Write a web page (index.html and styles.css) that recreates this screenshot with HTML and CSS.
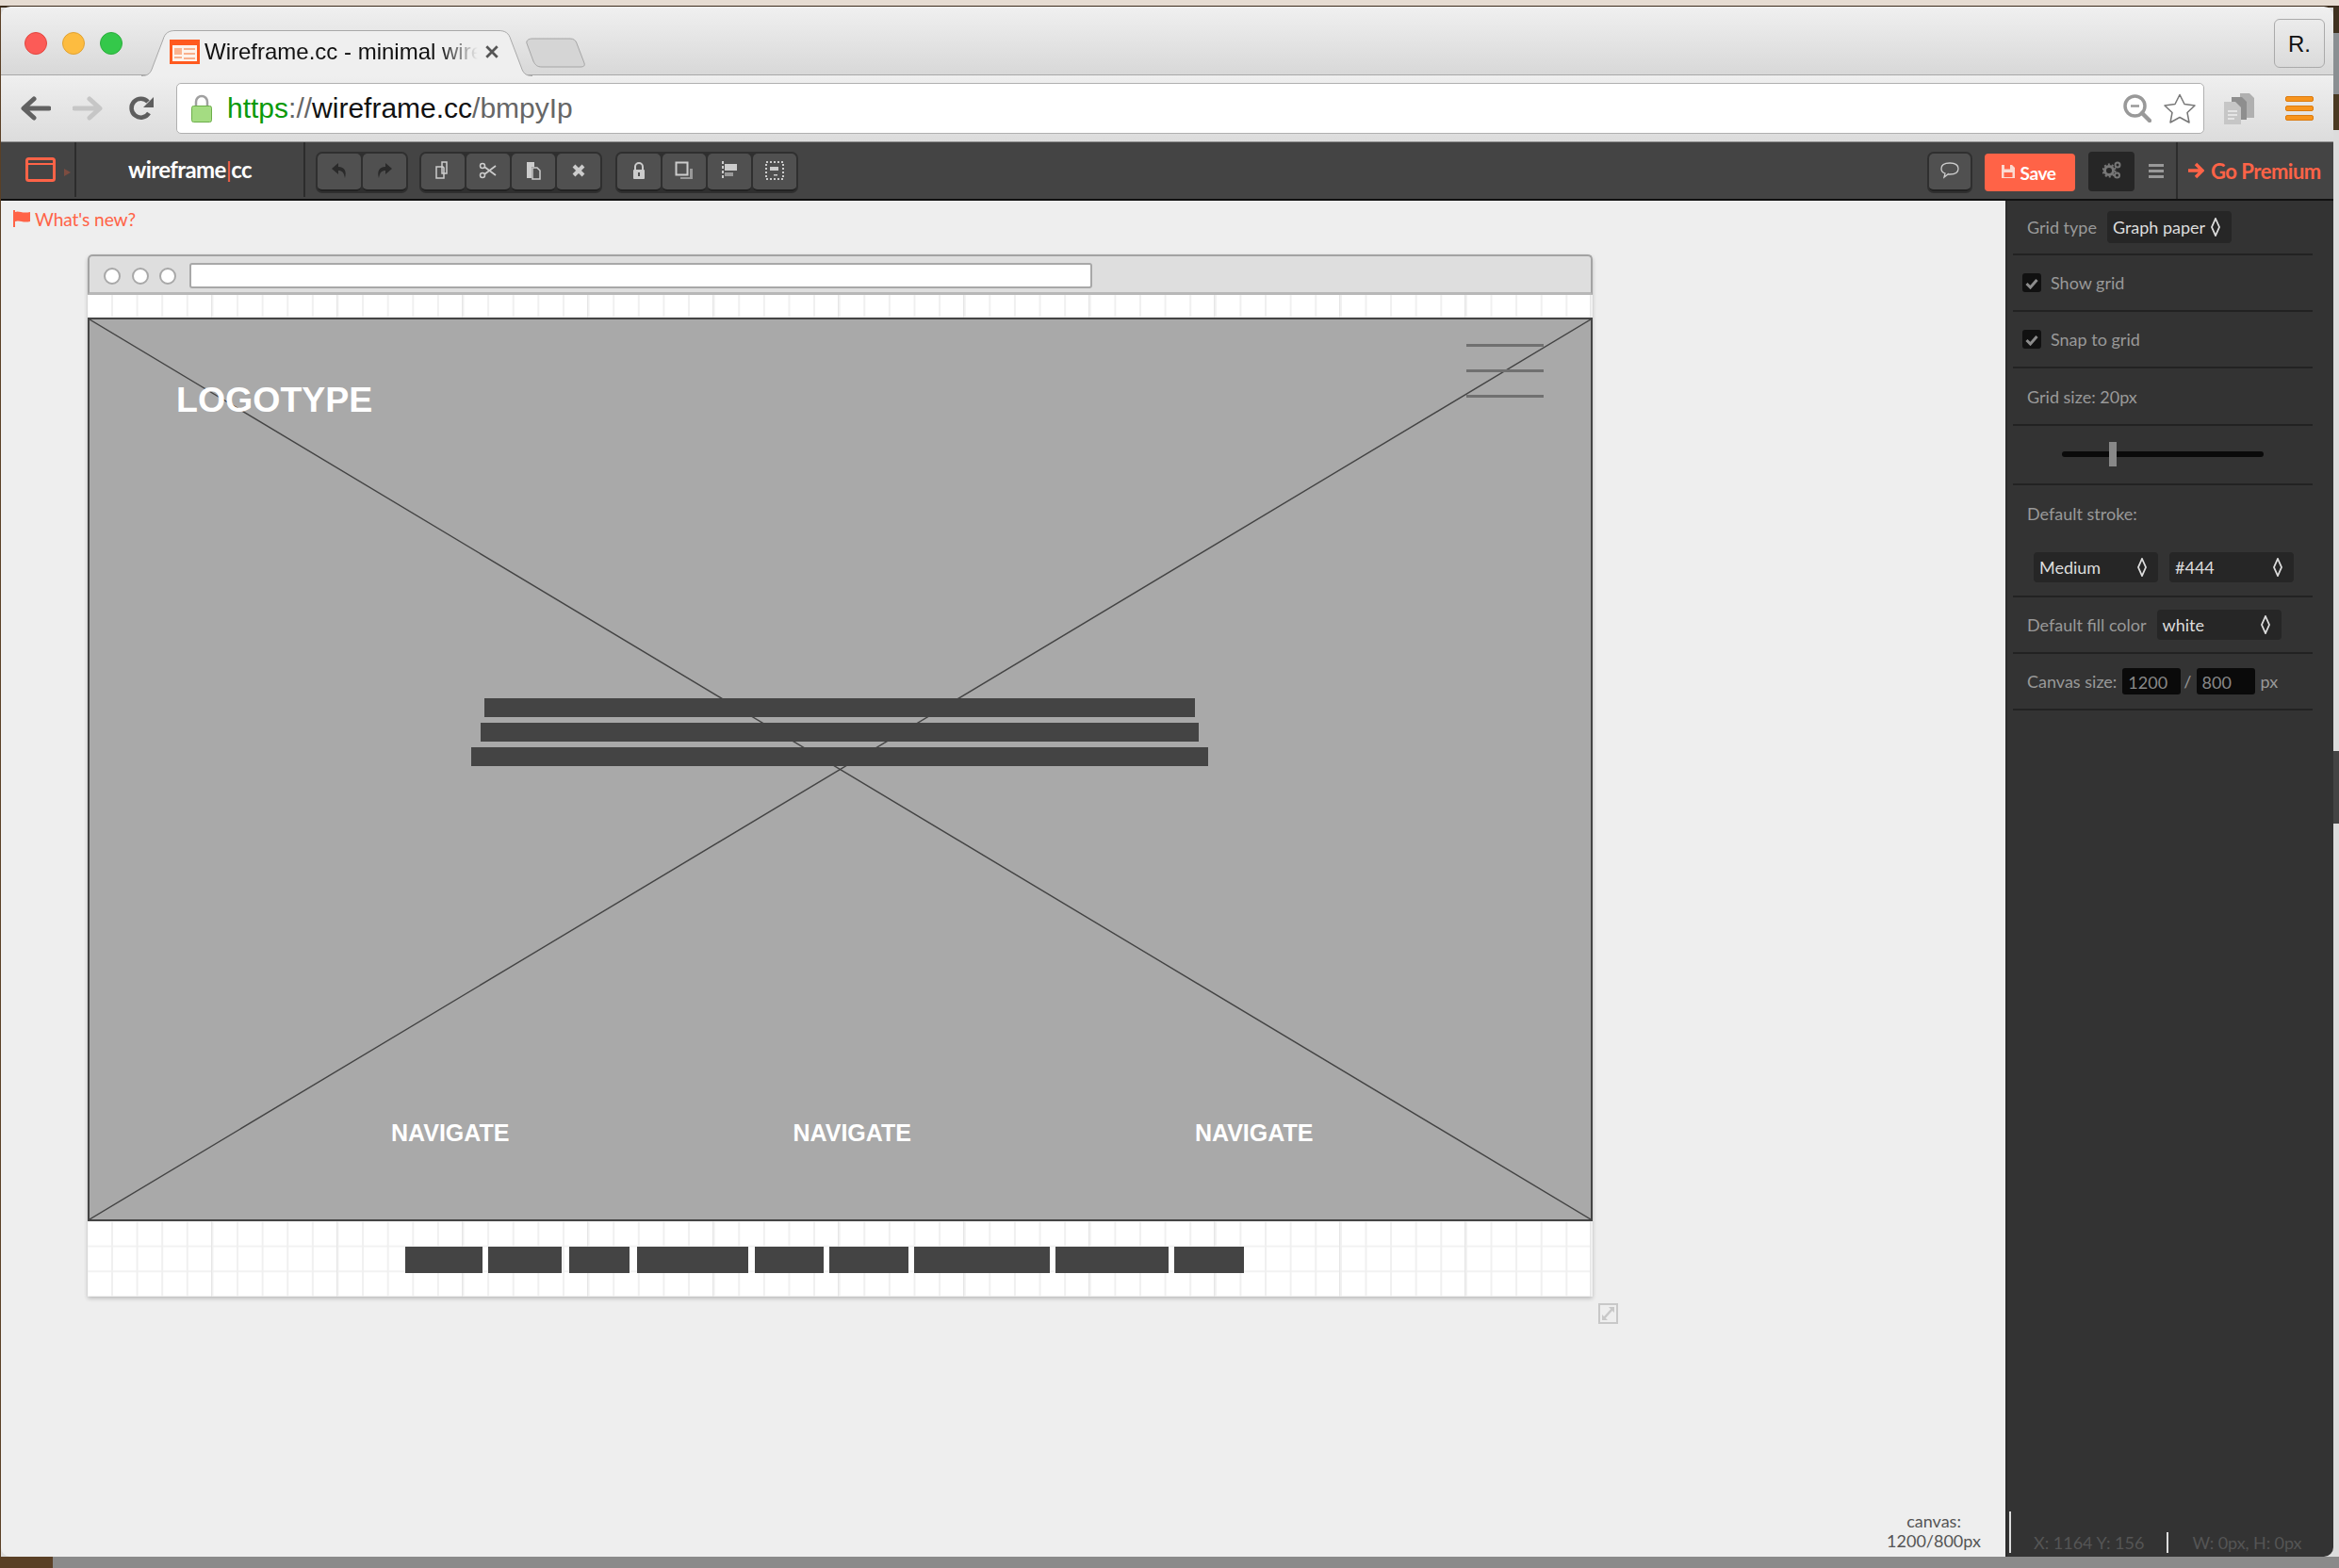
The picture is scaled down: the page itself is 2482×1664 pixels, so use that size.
FILE: index.html
```html
<!DOCTYPE html>
<html>
<head>
    <meta charset="utf-8">
    <title>Wireframe.cc</title>
    <link rel="stylesheet" href="styles.css">
</head>
<body>

<div class="window">

    <!-- Browser tabs -->
    <div class="tabstrip">
        <div class="lights">
            <span class="light red"></span>
            <span class="light yellow"></span>
            <span class="light green"></span>
        </div>
        <div class="tab">
            <svg class="tab-shape" viewBox="0 0 415 49"><path d="M0 48.5C8 48.5 10 45 12 39L23 10C25 3 29 .5 36 .5H379C386 .5 390 3 392 10L403 39C405 45 407 48.5 415 48.5" fill="#efefef" stroke="#a8a8a8"/></svg>
            <svg class="favicon" viewBox="0 0 32 26"><rect x="1.5" y="1.5" width="29" height="23" fill="#fdf3ec" stroke="#ff5a1f" stroke-width="3"/><rect x="3" y="3" width="26" height="3" fill="#ff5a1f"/><rect x="5" y="9" width="8" height="7" fill="#fbb591"/><path d="M15 10h12M15 15h12M5 19h8M15 20h12" stroke="#f9b08c" stroke-width="2"/></svg>
            <span class="tab-title">Wireframe.cc - minimal wire</span>
            <svg class="tab-close" viewBox="0 0 14 14"><path d="M2 2l10 10M12 2L2 12" stroke="#555" stroke-width="2.4"/></svg>
        </div>
        <svg class="newtab" viewBox="0 0 64 32"><path d="M8 1H48C52 1 54 3 55 6L63 27C64 30 62 31 59 31H18C13 31 11 29 9 25L2 6C1 3 4 1 8 1Z" fill="#d5d5d5" stroke="#a5a5a5"/></svg>
        <div class="profile">R.</div>
    </div>

    <!-- Browser toolbar -->
    <div class="toolbar">
        <svg class="nav back" viewBox="0 0 32 26"><path d="M14 3L3 13l11 10M4 13h26" fill="none" stroke="#616161" stroke-width="5" stroke-linecap="round" stroke-linejoin="round"/></svg>
        <svg class="nav forward" viewBox="0 0 32 26"><path d="M18 3l11 10-11 10M28 13H2" fill="none" stroke="#c6c6c6" stroke-width="5" stroke-linecap="round" stroke-linejoin="round"/></svg>
        <svg class="nav reload" viewBox="0 0 28 28"><path d="M22 19a10 10 0 1 1-1-12" fill="none" stroke="#5e5e5e" stroke-width="4.5"/><path d="M27 2v11H16z" fill="#5e5e5e"/></svg>
        <div class="omnibox">
            <svg class="lock" viewBox="0 0 22 30"><path d="M5 13V8a6 6 0 0 1 12 0v5" fill="none" stroke="#a0a0a0" stroke-width="2.5"/><rect x=".5" y="12.500" width="21" height="17" rx="2" fill="#a4dc82" stroke="#6dae4a"/></svg>
            <div class="url"><span class="url-scheme">https</span><span class="url-dim">://</span>wireframe.cc<span class="url-dim">/bmpyIp</span></div>
            <svg class="zoom-icon" viewBox="0 0 30 30"><circle cx="12.500" cy="12.500" r="10.500" fill="none" stroke="#999" stroke-width="3.500"/><path d="M20 20l8 8" stroke="#999" stroke-width="4.500" stroke-linecap="round"/><path d="M8 12.500h9" stroke="#999" stroke-width="2.500"/></svg>
            <svg class="star" viewBox="0 0 36 32"><path d="M18 1.500l5 10 11 1.500-8 7.500 2 10.500-10-5.500-10 5.500 2-10.500-8-7.500 11-1.500z" fill="#fff" stroke="#777" stroke-width="1.500" stroke-linejoin="round"/></svg>
        </div>
        <svg class="ext" viewBox="0 0 34 34"><path d="M18 1h10l5 5v21H18z" fill="#b0b0b0"/><path d="M9 5h11l5 5v19H9z" fill="#8e8e8e"/><path d="M1 10h12l6 6v18H1z" fill="#c6c6c6"/><path d="M5 20h10M5 24h10M5 28h7" stroke="#eee" stroke-width="1.500"/></svg>
        <div class="chrome-menu"><span></span><span></span><span></span></div>
    </div>

    <!-- App toolbar -->
    <div class="appbar">
        <div class="app-logo">
            <svg class="logo-icon" viewBox="0 0 32 26"><rect x="1.500" y="1.500" width="29" height="23" rx="2" fill="none" stroke="#ff6347" stroke-width="3"/><path d="M2 7h28" stroke="#ff6347" stroke-width="2"/></svg>
            <span class="logo-caret"></span>
        </div>
        <div class="brand">wireframe<span class="brand-bar">|</span>cc</div>

        <div class="btn-group btn-group-first">
            <div class="btn"><svg class="ico" viewBox="0 0 20 20"><path d="M9 2L2 8l7 6v-4c4 0 6 2 7 8 2-7 0-12-7-12z" fill="#2a2a2a"/></svg></div>
            <div class="btn"><svg class="ico" viewBox="0 0 20 20"><path d="M11 2l7 6-7 6v-4c-4 0-6 2-7 8-2-7 0-12 7-12z" fill="#2a2a2a"/></svg></div>
        </div>
        <div class="btn-group">
            <div class="btn"><svg class="ico" viewBox="0 0 20 20"><path d="M9 1h5v12H9zM3 6h7l1 1v11H3z" fill="#505050" stroke="#ccc" stroke-width="1.500"/></svg></div>
            <div class="btn"><svg class="ico" viewBox="0 0 20 20"><circle cx="4" cy="5" r="2.500" fill="none" stroke="#ccc" stroke-width="1.500"/><circle cx="4" cy="15" r="2.500" fill="none" stroke="#ccc" stroke-width="1.500"/><path d="M6 6l12 9M6 14l12-9" stroke="#ccc" stroke-width="1.700"/></svg></div>
            <div class="btn"><svg class="ico" viewBox="0 0 20 20"><path d="M3 1h8v5h-3v12H3z" fill="#ccc"/><path d="M9 7h5l3 3v9H9z" fill="#505050" stroke="#ccc" stroke-width="1.500"/></svg></div>
            <div class="btn"><svg class="ico" viewBox="0 0 20 20"><path d="M5 5l10 10M15 5L5 15" stroke="#ccc" stroke-width="4"/></svg></div>
        </div>
        <div class="btn-group btn-group-last">
            <div class="btn"><svg class="ico" viewBox="0 0 20 20"><path d="M6 9V6a4 4 0 0 1 8 0v3" fill="none" stroke="#ccc" stroke-width="2"/><rect x="4" y="9" width="12" height="10" rx="1" fill="#ccc"/><rect x="9" y="12" width="2" height="4" fill="#505050"/></svg></div>
            <div class="btn"><svg class="ico" viewBox="0 0 20 20"><rect x="1.500" y="1.500" width="12" height="13" fill="none" stroke="#ccc" stroke-width="2"/><path d="M16 8h3v11H6v-2h10z" fill="#999"/></svg></div>
            <div class="btn"><svg class="ico" viewBox="0 0 20 20"><path d="M3 0v20" stroke="#ccc" stroke-width="2" stroke-dasharray="3 2"/><rect x="5" y="3" width="13" height="7" fill="#ccc"/><rect x="5" y="12" width="9" height="4" fill="#999"/></svg></div>
            <div class="btn"><svg class="ico" viewBox="0 0 20 20"><rect x="1" y="1" width="18" height="18" fill="none" stroke="#ccc" stroke-width="2" stroke-dasharray="2 2"/><rect x="5" y="6" width="9" height="4" fill="#ccc"/><rect x="9" y="14" width="4" height="1.500" fill="#ccc"/></svg></div>
        </div>

        <div class="app-right">
            <div class="btn-group comment"><div class="btn"><svg class="ico" viewBox="0 0 20 20"><path d="M10 3c5 0 9 2 9 6s-4 6-9 6c-1 0-2 0-2-.1L4 18l1-4c-3-1-4-3-4-5 0-4 4-6 9-6z" fill="none" stroke="#ccc" stroke-width="1.300"/></svg></div></div>
            <div class="save">
                <svg class="save-icon" viewBox="0 0 16 16"><path d="M1 1h11l3 3v11H1z" fill="#fbd9d0"/><rect x="4" y="1" width="6" height="4.500" fill="#ff6347"/><rect x="3.500" y="9" width="9" height="5" fill="#ff6347"/></svg>
                Save
            </div>
            <div class="gears">
                <svg class="gears-icon" viewBox="0 0 20 20"><circle cx="7" cy="11" r="4.500" fill="none" stroke="#777" stroke-width="3"/><circle cx="7" cy="11" r="6.500" fill="none" stroke="#777" stroke-width="2" stroke-dasharray="2 2.100"/><circle cx="16" cy="5" r="2.500" fill="none" stroke="#777" stroke-width="2"/><circle cx="15.500" cy="16" r="2.500" fill="none" stroke="#777" stroke-width="2"/></svg>
            </div>
            <div class="app-menu"><span></span><span></span><span></span></div>
            <div class="premium">
                <svg class="premium-arrow" viewBox="0 0 18 18"><path d="M9 2l7 7-7 7M15 9H1" fill="none" stroke="#ff6347" stroke-width="3.500"/></svg>
                Go Premium
            </div>
        </div>
    </div>

    <div class="main">
        <div class="workspace">
            <a class="whats-new"><svg class="flag" viewBox="0 0 19 18"><path d="M1 0v18" stroke="#ff6347" stroke-width="2"/><path d="M2 2c4-2 7 2 16 0v10c-8 2-11-2-16 0z" fill="#ff6347"/></svg>What's new?</a>

            <div class="canvas">
                <div class="mock-bar">
                    <span class="mock-dot"></span>
                    <span class="mock-dot"></span>
                    <span class="mock-dot"></span>
                    <span class="mock-url"></span>
                </div>

                <div class="wf-image">
                    <svg class="wf-cross" viewBox="0 0 100 100" preserveAspectRatio="none"><path d="M0 0L100 100M100 0L0 100" stroke="#444" stroke-width="1.400" vector-effect="non-scaling-stroke"/></svg>
                </div>
                <div class="wf-logo">LOGOTYPE</div>
                <div class="wf-burger"><span></span><span></span><span></span></div>
                <div class="wf-headline"><span class="line1"></span><span class="line2"></span><span class="line3"></span></div>
                <div class="wf-nav"><span>NAVIGATE</span><span>NAVIGATE</span><span>NAVIGATE</span></div>
                <div class="wf-footer">
                    <span class="f1"></span><span class="f2"></span><span class="f3"></span>
                    <span class="f4"></span><span class="f5"></span><span class="f6"></span>
                    <span class="f7"></span><span class="f8"></span><span class="f9"></span>
                </div>
                <svg class="wf-resize" viewBox="0 0 21 22"><rect x="1" y="1" width="19" height="20" fill="none" stroke="#c8c8c8" stroke-width="2"/><path d="M6 16L15 6" stroke="#c8c8c8" stroke-width="2.500"/><path d="M11 4h6v6zM4 12v6h6z" fill="#c8c8c8"/></svg>
            </div>

            <div class="canvas-size">canvas:<br>1200/800px</div>
        </div>

        <div class="sidebar">
            <div class="row row-first">
                <span class="lbl">Grid type</span>
                <div class="sel sel-grid">Graph paper <svg class="updown" viewBox="0 0 10 20"><path d="M5 1l4 9-4 9-4-9z" fill="none" stroke="#ddd" stroke-width="1.800"/></svg></div>
            </div>
            <div class="row">
                <span class="check"><svg viewBox="0 0 14 12"><path d="M1.500 6l4 4 7-8" fill="none" stroke="#8c8c8c" stroke-width="3"/></svg></span>
                <span class="lbl">Show grid</span>
            </div>
            <div class="row">
                <span class="check"><svg viewBox="0 0 14 12"><path d="M1.500 6l4 4 7-8" fill="none" stroke="#8c8c8c" stroke-width="3"/></svg></span>
                <span class="lbl">Snap to grid</span>
            </div>
            <div class="row row-size"><span class="lbl">Grid size: 20px</span></div>
            <div class="row row-slider">
                <div class="slider"><span class="thumb"></span></div>
            </div>
            <div class="row row-stroke">
                <span class="lbl">Default stroke:</span>
                <div class="stroke-selects">
                    <div class="sel">Medium <svg class="updown" viewBox="0 0 10 20"><path d="M5 1l4 9-4 9-4-9z" fill="none" stroke="#ddd" stroke-width="1.800"/></svg></div>
                    <div class="sel">#444 <svg class="updown" viewBox="0 0 10 20"><path d="M5 1l4 9-4 9-4-9z" fill="none" stroke="#ddd" stroke-width="1.800"/></svg></div>
                </div>
            </div>
            <div class="row">
                <span class="lbl">Default fill color</span>
                <div class="sel sel-fill">white <svg class="updown" viewBox="0 0 10 20"><path d="M5 1l4 9-4 9-4-9z" fill="none" stroke="#ddd" stroke-width="1.800"/></svg></div>
            </div>
            <div class="row">
                <span class="lbl">Canvas size:</span>
                <span class="num num-w">1200</span>
                <span class="lbl slash">/</span>
                <span class="num">800</span>
                <span class="lbl px">px</span>
            </div>

            <div class="status">
                <span class="status-tall"></span>
                <span class="status-xy">X: 1164 Y: 156</span>
                <span class="status-short"></span>
                <span class="status-wh">W: 0px, H: 0px</span>
            </div>
        </div>
    </div>
</div>

</body>
</html>
```

FILE: styles.css
```css
html, body { margin: 0; padding: 0; }
html { height: 1664px; overflow: hidden; }
body {
    width: 2482px;
    height: 1664px;
    box-sizing: border-box;
    padding-top: 7px;
    overflow: hidden;
    font-family: "Lato", sans-serif;
    background-color: #ddd;
    background-image:
        linear-gradient(#e6dcd2 0 6px, #3b2c1c 6px 8px, transparent 8px),
        linear-gradient(to right, #5a4026 0 56px, #8a8a8a 56px),
        linear-gradient(#5a4026, #5a4026),
        linear-gradient(#3f3220 0 35px, #8a8f92 35px 100px, #4a3a22 100px 138px, #dcdcdc 138px 797px, #444 797px 874px, #dcdcdc 874px);
    background-size: 100% 100%, 100% 12px, 1px 100%, 6px 100%;
    background-position: 0 0, 0 100%, 0 0, 100% 0;
    background-repeat: no-repeat;
}
svg { display: block; flex: none; }

.window {
    position: relative;
    width: 2475px;
    height: 1645px;
    margin-left: 1px;
    border-radius: 10px;
    overflow: hidden;
    display: flex;
    flex-direction: column;
}

/* browser tabs */
.tabstrip {
    display: flex;
    flex: none;
    height: 73px;
    box-sizing: border-box;
    background: linear-gradient(#f0f0f0, #d8d8d8);
    border-bottom: 1px solid #a8a8a8;
}
.lights { display: flex; gap: 16px; padding: 27px 0 0 25px; }
.light { width: 24px; height: 24px; border-radius: 50%; box-sizing: border-box; }
.red { background: #fc5b57; border: 1px solid #e2463f; }
.yellow { background: #fdbc40; border: 1px solid #e0a233; }
.green { background: #34c84a; border: 1px solid #2cae3d; }
.tab {
    position: relative;
    width: 415px;
    height: 49px;
    margin: 25px 0 0 20px;
    display: flex;
    align-items: center;
    padding: 0 0 0 30px;
    box-sizing: border-box;
}
.tab-shape { position: absolute; left: 0; top: 0; width: 415px; height: 49px; }
.favicon { position: relative; width: 32px; height: 26px; margin-top: -4px; }
.tab-title {
    position: relative;
    margin-left: 5px;
    margin-top: -4px;
    font: 24px "Liberation Sans", sans-serif;
    white-space: nowrap;
    color: #111;
    -webkit-mask-image: linear-gradient(to right, #000 250px, transparent 290px);
    mask-image: linear-gradient(to right, #000 250px, transparent 290px);
}
.tab-close { position: relative; width: 16px; height: 16px; margin: -4px 0 0 1px; }
.newtab { width: 64px; height: 32px; margin: 33px 0 0 -8px; }
.profile {
    margin: 13px 9px 0 auto;
    width: 54px;
    height: 52px;
    box-sizing: border-box;
    border: 1px solid #aaa;
    border-radius: 6px;
    text-align: center;
    font: 24px/52px "Liberation Sans", sans-serif;
    color: #111;
}

/* browser toolbar */
.toolbar {
    display: flex;
    align-items: center;
    flex: none;
    height: 71px;
    box-sizing: border-box;
    background: linear-gradient(#efefef, #dcdcdc);
    border-bottom: 1px solid #8f8f8f;
}
.nav { width: 32px; height: 26px; }
.back { margin-left: 21px; }
.forward { margin-left: 23px; }
.reload { width: 28px; height: 28px; margin-left: 27px; }
.omnibox {
    display: flex;
    align-items: center;
    margin-left: 23px;
    width: 2152px;
    height: 54px;
    box-sizing: border-box;
    padding: 0 7px 0 15px;
    background: #fff;
    border: 1px solid #b0b0b0;
    border-radius: 5px;
}
.lock { width: 22px; height: 30px; }
.url {
    flex: 1;
    margin-left: 16px;
    font: 30px "Liberation Sans", sans-serif;
    color: #111;
}
.url-scheme { color: #0a9a0a; }
.url-dim { color: #666; }
.zoom-icon { width: 30px; height: 30px; }
.star { width: 36px; height: 32px; margin-left: 12px; }
.ext { width: 34px; height: 34px; margin-left: 20px; }
.chrome-menu { display: flex; flex-direction: column; gap: 4px; margin-left: 32px; }
.chrome-menu span { display: block; width: 30px; height: 6px; border-radius: 2px; background: #f7941d; border: 1px solid #dc7c10; box-sizing: border-box; }

/* app toolbar */
.appbar {
    display: flex;
    flex: none;
    height: 62px;
    box-sizing: border-box;
    background: #444;
    border-bottom: 2px solid #111;
    color: #fff;
}
.app-logo {
    display: flex;
    align-items: center;
    width: 80px;
    padding: 0 0 0 26px;
    box-sizing: border-box;
    border-right: 2px solid #2c2c2c;
    margin-bottom: 2px;
}
.logo-icon { width: 32px; height: 26px; }
.logo-caret { width: 0; height: 0; margin: 6px 0 0 9px; border-left: 7px solid #7c4c40; border-top: 4px solid transparent; border-bottom: 4px solid transparent; }
.brand {
    width: 243px;
    box-sizing: border-box;
    border-right: 2px solid #2c2c2c;
    margin-bottom: 2px;
    text-align: center;
    font-size: 24px;
    font-weight: 700;
    line-height: 58px;
    letter-spacing: -.6px;
}
.brand-bar { color: #ff6347; font-weight: 400; }
.btn-group {
    display: flex;
    gap: 2px;
    height: 44px;
    box-sizing: border-box;
    margin: 10px 0 0 12px;
    padding: 2px;
    border-radius: 7px;
    background: #2f2f2f;
}
.btn-group-first { margin-left: 11px; }
.btn-group-last { margin-left: 14px; }
.btn {
    display: flex;
    align-items: center;
    justify-content: center;
    width: 46px;
    box-sizing: border-box;
    padding-bottom: 2px;
    background: #505050;
    border-bottom: 2px solid #222;
    border-radius: 5px;
}
.ico { width: 20px; height: 20px; }
.app-right { display: flex; margin-left: auto; height: 60px; }
.comment { margin: 10px 0 0 0; }
.comment .btn { width: 44px; padding-bottom: 4px; }
.save {
    display: flex;
    align-items: center;
    justify-content: center;
    gap: 5px;
    width: 96px;
    height: 40px;
    padding-right: 4px;
    box-sizing: border-box;
    margin: 12px 0 0 13px;
    background: #ff6347;
    border-radius: 4px;
    font-size: 19px;
    font-weight: 700;
    letter-spacing: -.4px;
}
.save-icon { width: 16px; height: 16px; margin-top: -2px; }
.gears {
    display: flex;
    align-items: center;
    justify-content: center;
    width: 49px;
    height: 42px;
    margin: 10px 0 0 14px;
    background: #262626;
    border-radius: 4px;
}
.gears-icon { width: 20px; height: 20px; margin-top: -4px; }
.app-menu { display: flex; flex-direction: column; gap: 3px; margin: 23px 0 0 15px; }
.app-menu span { display: block; width: 16px; height: 3px; background: #999; }
.premium {
    display: flex;
    align-items: center;
    gap: 7px;
    width: 167px;
    box-sizing: border-box;
    margin-left: 13px;
    padding-left: 10px;
    border-left: 2px solid #2c2c2c;
    font-size: 22px;
    font-weight: 700;
    color: #ff6347;
    letter-spacing: -.5px;
}
.premium-arrow { width: 18px; height: 18px; }

/* page area */
.main { display: flex; flex: 1; min-height: 0; }
.workspace {
    flex: 1;
    display: flex;
    flex-direction: column;
    min-width: 0;
    background: #eee;
}
.whats-new {
    display: flex;
    align-items: center;
    gap: 4px;
    height: 24px;
    margin: 7px 0 0 13px;
    font-size: 19.200px;
    color: #ff6347;
    letter-spacing: -.1px;
}
.flag { width: 19px; height: 18px; }

/* the wireframe: shapes sit where the user dropped them */
.canvas {
    position: relative;
    width: 1597px;
    height: 1106px;
    margin: 26px 0 0 92px;
    background-color: #fff;
    background-image:
        linear-gradient(to right, #e6e6e6 1px, transparent 1px),
        linear-gradient(to right, #f0f0f0 2px, transparent 2px),
        linear-gradient(#f2f2f2 2px, transparent 2px);
    background-size: 133px 100%, 26.620px 100%, 100% 26.670px;
    background-position: 131px 0, 25px 0, 0 12px;
    box-shadow: 0 2px 4px rgba(0, 0, 0, .22);
    border-radius: 5px 5px 0 0;
}
.mock-bar {
    display: flex;
    align-items: center;
    height: 43px;
    box-sizing: border-box;
    padding: 3px 0 0 15px;
    background: #dedede;
    border: solid #a3a3a3;
    border-width: 2px 2px 3px;
    border-bottom-color: #b8b8b8;
    border-radius: 5px 5px 0 0;
}
.mock-dot { width: 18px; height: 18px; margin-right: 11.500px; border: 2px solid #a8a8a8; border-radius: 50%; background: #fff; box-sizing: border-box; }
.mock-url { width: 958px; height: 27px; margin-left: 2px; box-sizing: border-box; border: 2px solid #a8a8a8; border-radius: 3px; background: #fff; }
.wf-image {
    position: absolute;
    left: 0;
    top: 67px;
    width: 1597px;
    height: 959px;
    box-sizing: border-box;
    background: #a9a9a9;
    border: 2px solid #444;
}
.wf-cross { width: 100%; height: 100%; }
.wf-logo {
    position: absolute;
    left: 94px;
    top: 132px;
    font: bold 37.500px/44px "Liberation Sans", sans-serif;
    color: #fff;
}
.wf-burger { position: absolute; left: 1463px; top: 95px; display: flex; flex-direction: column; gap: 24px; }
.wf-burger span { display: block; width: 82px; height: 3px; background: #707070; }
.wf-headline {
    position: absolute;
    left: 407px;
    top: 471px;
    width: 782px;
    display: flex;
    flex-direction: column;
    align-items: center;
    gap: 6px;
}
.wf-headline span { display: block; height: 20px; background: #444; }
.wf-headline .line1 { width: 754px; }
.wf-headline .line2 { width: 762px; }
.wf-headline .line3 { width: 782px; }
.wf-nav {
    position: absolute;
    left: 322px;
    top: 918px;
    display: flex;
    gap: 301px;
    font: bold 25px/28px "Liberation Sans", sans-serif;
    color: #fff;
}
.wf-footer { position: absolute; left: 337px; top: 1053px; display: flex; height: 28px; }
.wf-footer span { display: block; background: #444; }
.f1 { width: 82px; }
.f2 { width: 78px; margin-left: 6px; }
.f3 { width: 64px; margin-left: 8px; }
.f4 { width: 118px; margin-left: 8px; }
.f5 { width: 73px; margin-left: 7px; }
.f6 { width: 84px; margin-left: 6px; }
.f7 { width: 144px; margin-left: 6px; }
.f8 { width: 120px; margin-left: 6px; }
.f9 { width: 74px; margin-left: 6px; }
.wf-resize { position: absolute; left: 1603px; top: 1113px; width: 21px; height: 22px; }

.canvas-size {
    margin: auto 26px 6px 0;
    align-self: flex-end;
    text-align: center;
    font-size: 18px;
    line-height: 21px;
    color: #555;
}

/* properties panel */
.sidebar {
    flex: none;
    display: flex;
    flex-direction: column;
    width: 348px;
    box-sizing: border-box;
    padding: 0 22px 0 8px;
    background: #333;
    border-left: 2px solid #2b2b2b;
}
.row {
    display: flex;
    align-items: center;
    flex: none;
    height: 60px;
    box-sizing: border-box;
    margin-left: -2px;
    padding: 0 0 0 15px;
    border-bottom: 2px solid #222;
    font-size: 18px;
}
.row-first { height: 58px; }
.row-size { height: 61px; }
.row-slider { height: 63px; justify-content: center; padding: 0 0 2px 0; }
.row-stroke { height: 119px; flex-direction: column; align-items: flex-start; padding-top: 19px; justify-content: flex-start; }
.lbl { color: #999; }
.sel {
    display: flex;
    align-items: center;
    justify-content: space-between;
    width: 132px;
    height: 32px;
    box-sizing: border-box;
    padding: 0 12px 0 6px;
    background: #262626;
    border-radius: 4px;
    color: #ddd;
    font-size: 18px;
}
.updown { width: 10px; height: 20px; }
.sel-grid { margin-left: 11px; height: 34px; }
.sel-fill { margin-left: 11px; }
.check {
    display: flex;
    align-items: center;
    justify-content: center;
    width: 20px;
    height: 20px;
    margin-left: -5px;
    margin-right: 10px;
    background: #111;
    border-radius: 3px;
}
.check svg { width: 14px; height: 12px; margin-top: 2px; }
.slider { position: relative; width: 214px; height: 6px; border-radius: 3px; background: #0a0a0a; }
.thumb { position: absolute; left: 50px; top: -10px; width: 8px; height: 26px; background: #888; }
.stroke-selects { display: flex; gap: 12px; margin: 30px 0 0 7px; }
.num {
    width: 62px;
    height: 28px;
    margin-left: 5px;
    box-sizing: border-box;
    padding-left: 6px;
    background: #0a0a0a;
    border-radius: 3px;
    color: #888;
    line-height: 30px;
    font-size: 18px;
}
.num-w { margin-left: 6px; }
.slash { margin-left: 3px; margin-right: 0; }
.px { margin-left: 6px; }

.status {
    display: flex;
    align-items: flex-end;
    margin: auto 0 4px -6px;
    font-size: 18px;
    color: #555;
    line-height: 22px;
}
.status-tall { width: 2px; height: 44px; background: #ddd; }
.status-short { width: 2px; height: 22px; margin-left: 24px; background: #ddd; }
.status-xy { margin-left: 24px; }
.status-wh { margin-left: 25px; letter-spacing: -.1px; }
```
